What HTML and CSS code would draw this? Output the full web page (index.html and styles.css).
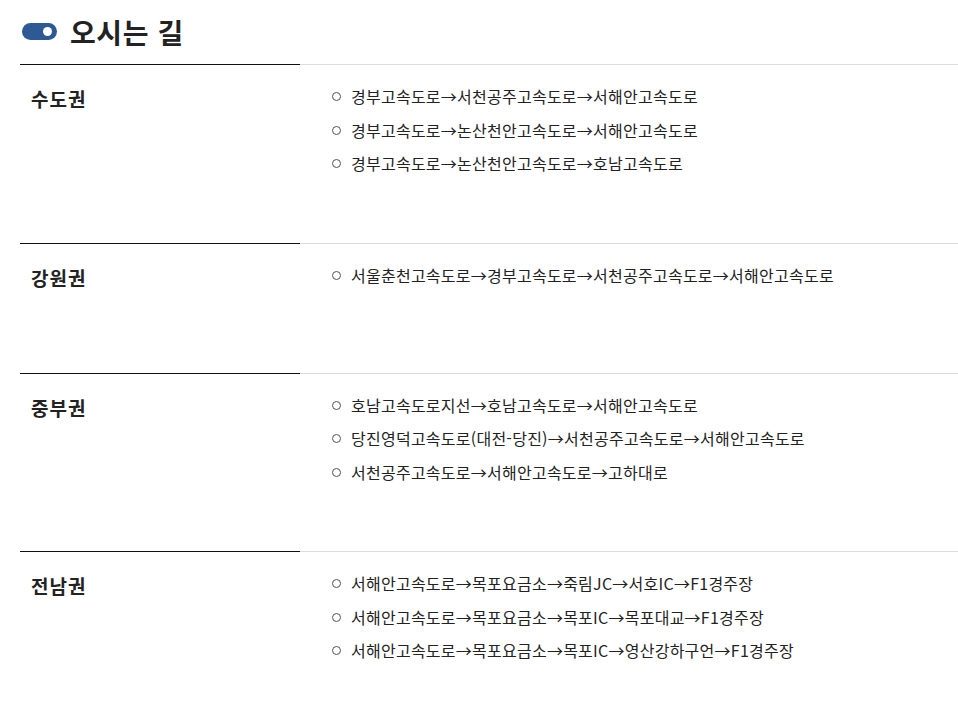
FILE: index.html
```html
<!DOCTYPE html>
<html lang="ko">
<head>
<meta charset="utf-8">
<title>오시는 길</title>
<link rel="stylesheet" href="styles.css">
</head>
<body>
<div class="page">
  <header class="title">
    <span class="toggle"></span>
    <h2>오시는 길</h2>
  </header>

  <section class="row">
    <div class="region"><h3>수도권</h3></div>
    <ul class="routes">
      <li>경부고속도로→서천공주고속도로→서해안고속도로</li>
      <li>경부고속도로→논산천안고속도로→서해안고속도로</li>
      <li>경부고속도로→논산천안고속도로→호남고속도로</li>
    </ul>
  </section>

  <section class="row">
    <div class="region"><h3>강원권</h3></div>
    <ul class="routes">
      <li>서울춘천고속도로→경부고속도로→서천공주고속도로→서해안고속도로</li>
    </ul>
  </section>

  <section class="row">
    <div class="region"><h3>중부권</h3></div>
    <ul class="routes">
      <li>호남고속도로지선→호남고속도로→서해안고속도로</li>
      <li>당진영덕고속도로(대전-당진)→서천공주고속도로→서해안고속도로</li>
      <li>서천공주고속도로→서해안고속도로→고하대로</li>
    </ul>
  </section>

  <section class="row">
    <div class="region"><h3>전남권</h3></div>
    <ul class="routes">
      <li>서해안고속도로→목포요금소→죽림JC→서호IC→F1경주장</li>
      <li>서해안고속도로→목포요금소→목포IC→목포대교→F1경주장</li>
      <li>서해안고속도로→목포요금소→목포IC→영산강하구언→F1경주장</li>
    </ul>
  </section>
</div>
</body>
</html>
```

FILE: styles.css
```css
* { box-sizing: border-box; }
html, body { margin: 0; padding: 0; background: #fff; }
body {
  font-family: "Noto Sans CJK KR", "Noto Sans", sans-serif;
  color: #222;
}
.page { padding-left: 20px; }

.title {
  height: 64px;
  display: flex;
  align-items: center;
  gap: 13px;
  padding-left: 2px;
}
.toggle {
  width: 35px;
  height: 17px;
  border-radius: 9px;
  background: #2d5a94;
  position: relative;
  margin-top: -1px;
}
.toggle::after {
  content: "";
  position: absolute;
  right: 5px;
  top: 4px;
  width: 9px;
  height: 9px;
  border-radius: 50%;
  background: #fff;
}
.title h2 {
  margin: 0;
  font-size: 28px;
  font-weight: 700;
  line-height: 34px;
  letter-spacing: 0.6px;
  color: #222;
}

.row {
  display: grid;
  grid-template-columns: 280px 1fr;
  min-height: 130px;
}
.region {
  border-top: 1px solid #111;
  padding: 20px 11px 0;
}
.region h3 {
  margin: 0;
  font-size: 19px;
  font-weight: 700;
  line-height: 28px;
  letter-spacing: 1px;
}
.routes {
  border-top: 1px solid #dcdcdc;
  margin: 0;
  list-style: none;
  padding: 15px 0 62px 32px;
}
.routes li {
  display: flex;
  align-items: center;
  gap: 10px;
  font-size: 16px;
  line-height: 33.5px;
  letter-spacing: 0.25px;
  color: #222;
  white-space: nowrap;
}
.routes li::before {
  content: "";
  width: 7px;
  height: 7px;
  border: 1.4px solid #555;
  border-radius: 50%;
  flex: none;
}
```
